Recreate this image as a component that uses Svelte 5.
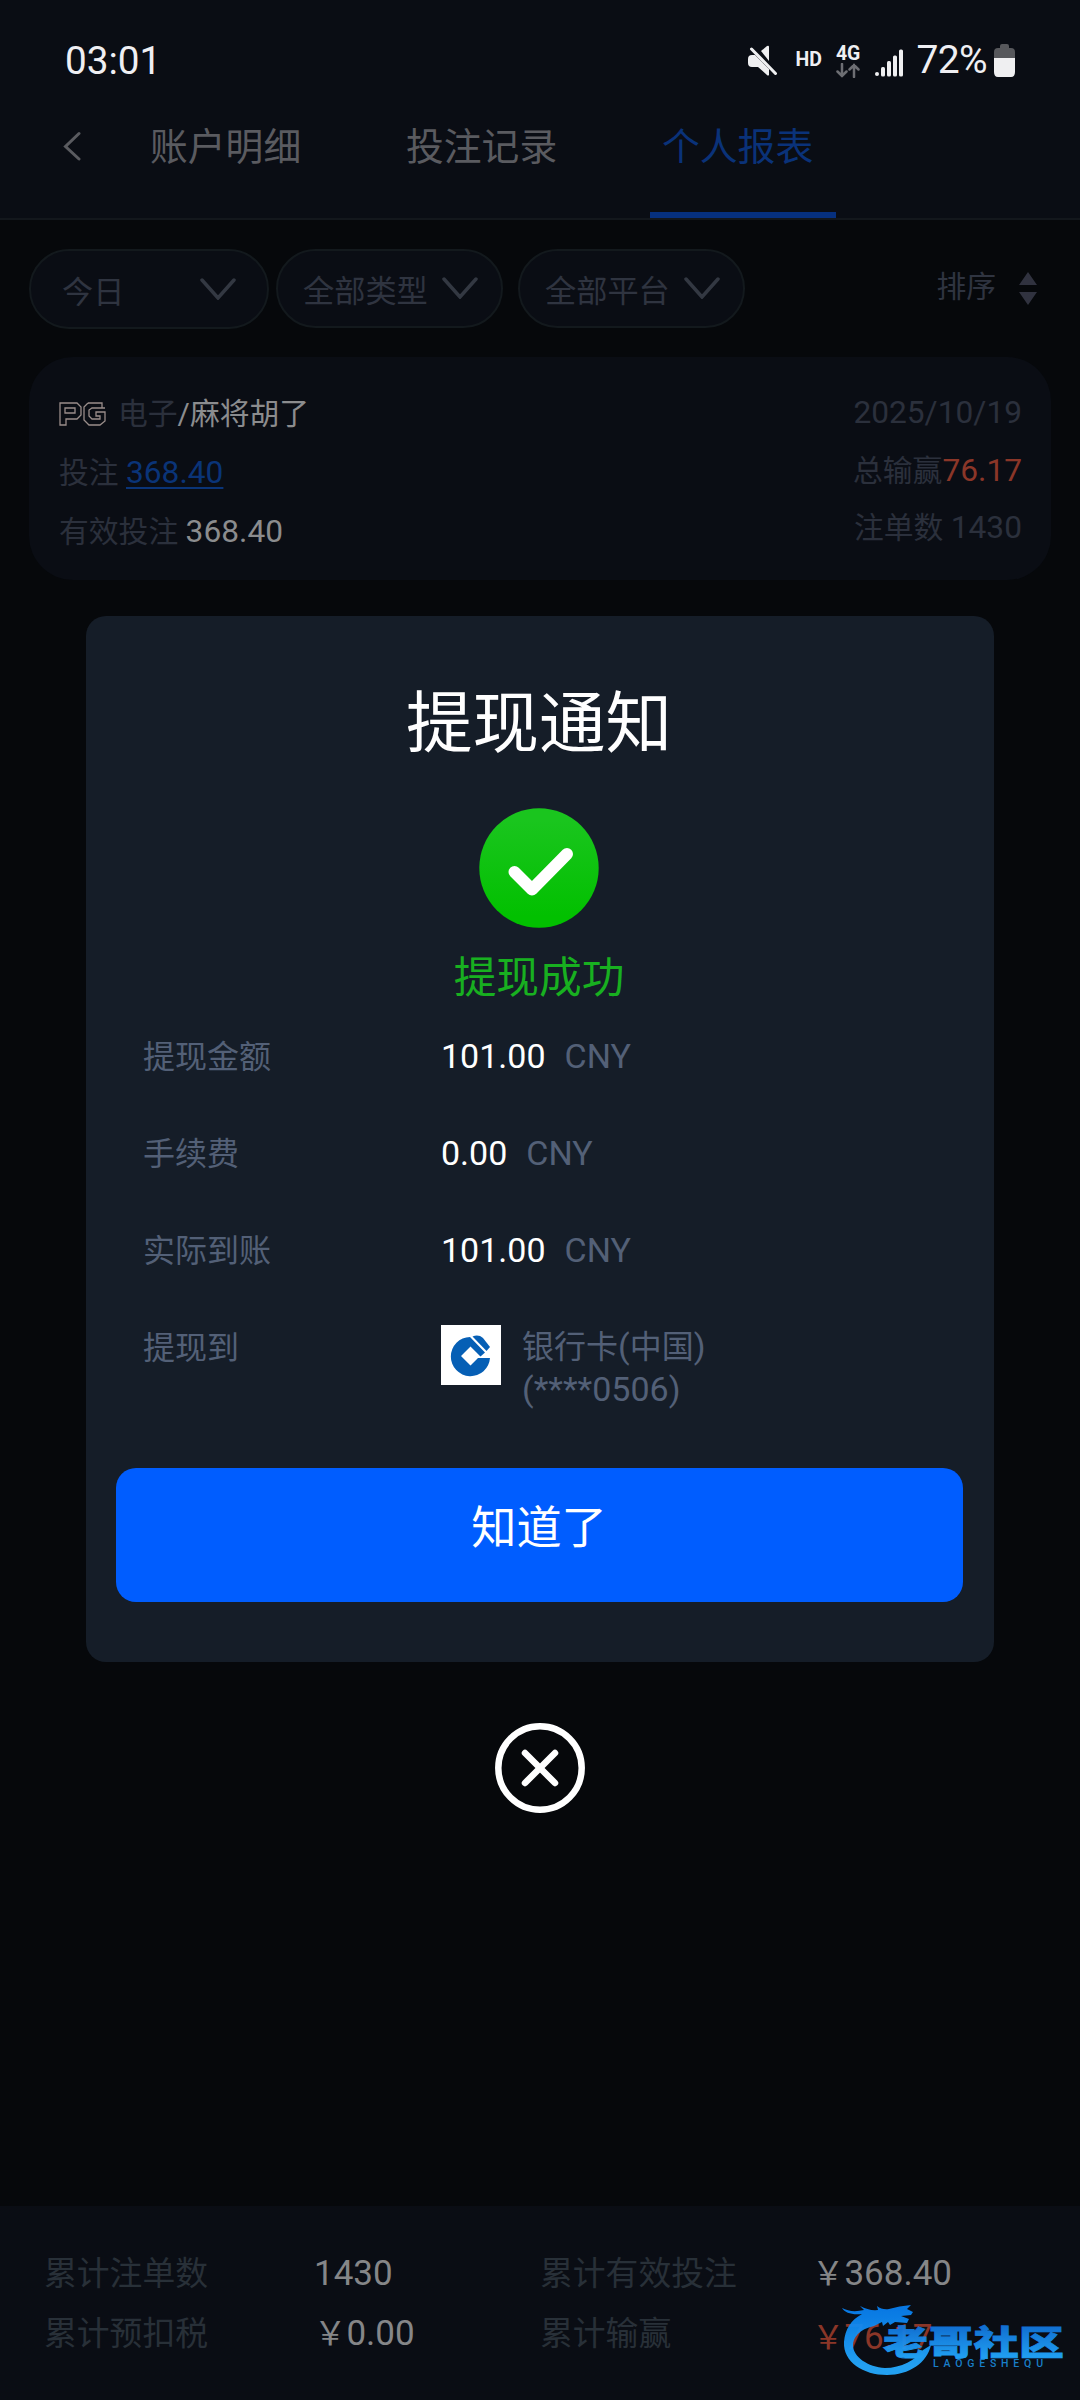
<script>
    const tabs = ["账户明细", "投注记录", "个人报表"];
    let activeTab = $state("个人报表");

    const filters = [
        { label: "今日", wide: true },
        { label: "全部类型" },
        { label: "全部平台" },
    ];

    const amounts = [
        { label: "提现金额", value: "101.00" },
        { label: "手续费", value: "0.00" },
        { label: "实际到账", value: "101.00" },
    ];

    let showModal = $state(true);

    const close = () => {
        showModal = false;
    };
</script>

<div class="page">
    <div class="status-bar">
        <span class="time">03:01</span>
        <div class="status-icons">
            <svg class="mute" viewBox="0 0 30 31" width="30" height="31">
                <path d="M0 14q0-4 4-4h3l14 14v6q-1 1-2 0l-9-8H4q-4 0-4-4z" />
                <path d="M13 6l6-5q2-1 2 1v14z" />
                <path class="slash" d="M3.500 4L27.500 28.500" />
            </svg>
            <span class="hd">HD</span>
            <div class="network">
                <span>4G</span>
                <svg viewBox="0 0 24 15" width="24" height="15">
                    <path d="M6 1v12M1.500 8.500L6 13l4.500-4.500M18 14V2M13.500 6.500L18 2l4.500 4.500" />
                </svg>
            </div>
            <svg class="signal" viewBox="0 0 28 28" width="28" height="28">
                <rect x="0" y="23" width="4" height="4" rx="2" />
                <rect x="6" y="18" width="4" height="9.500" rx="1.500" />
                <rect x="12" y="12" width="4" height="15.500" rx="1.500" />
                <rect x="18" y="6.500" width="4" height="21" rx="1.500" />
                <rect x="24" y="0.500" width="4" height="27" rx="1.500" />
            </svg>
            <span class="percent">72%</span>
            <svg class="battery" viewBox="0 0 21 33" width="21" height="33">
                <path class="empty" d="M6 2q0-2 2-2h5q2 0 2 2v2h2q4 0 4 4v7H0V8q0-4 4-4h2z" />
                <path d="M0 14h21v14q0 5-4 5H4q-4 0-4-5z" />
            </svg>
        </div>
    </div>

    <nav class="nav">
        <button class="back" aria-label="返回">
            <svg viewBox="0 0 18 30" width="18" height="30">
                <path d="M16 2.500L2.500 15.500 16 28" />
            </svg>
        </button>
        <div class="tabs">
            {#each tabs as tab}
                <button
                    class="tab"
                    class:active={tab === activeTab}
                    onclick={() => (activeTab = tab)}>{tab}</button
                >
            {/each}
        </div>
    </nav>

    <div class="filters">
        {#each filters as filter}
            <button class="filter" class:wide={filter.wide}>
                <span>{filter.label}</span>
                <svg viewBox="0 0 36 22" width="36" height="22">
                    <path d="M2 2l16 18L34 2" />
                </svg>
            </button>
        {/each}
        <button class="sort">
            <span>排序</span>
            <svg viewBox="0 0 18 33" width="18" height="33">
                <path d="M9 0l9 13H0zM0 20h18L9 33z" />
            </svg>
        </button>
    </div>

    <section class="card">
        <div class="card-left">
            <p class="game">
                <svg viewBox="0 0 47 24" width="47" height="24">
                    <path d="M1 1h17l4 4v8l-4 4H7v6H1zM6 6h10v5H6z" />
                    <path d="M29 1h14v5h3M29 1l-4 4v13l5 5h11l5-4v-9h-9v4h4v3h-8l-3-3V8l3-2h10" />
                </svg>
                <span>电子</span><b>/麻将胡了</b>
            </p>
            <p>投注 <a class="num" href="#bets">368.40</a></p>
            <p>有效投注 <b class="num">368.40</b></p>
        </div>
        <div class="card-right">
            <p class="num">2025/10/19</p>
            <p>总输赢<span class="num red">76.17</span></p>
            <p>注单数 <span class="num">1430</span></p>
        </div>
    </section>

    <footer class="totals">
        <span>累计注单数</span>
        <b>1430</b>
        <span>累计有效投注</span>
        <b class="shift"><i>￥</i>368.40</b>
        <span>累计预扣税</span>
        <b><i>￥</i>0.00</b>
        <span>累计输赢</span>
        <b class="red shift low"><i>￥</i>76.17</b>
    </footer>
</div>

{#if showModal}
    <div class="overlay">
        <div class="modal">
            <h1>提现通知</h1>
            <svg class="success" viewBox="0 0 120 120" width="120" height="120">
                <defs>
                    <linearGradient id="green" x1="0" y1="0" x2="0" y2="1">
                        <stop offset="0.1" stop-color="#1ac51e" />
                        <stop offset="0.9" stop-color="#02c000" />
                    </linearGradient>
                </defs>
                <circle cx="60" cy="60" r="59.700" fill="url(#green)" />
                <path d="M35.500 64L53 81.500 88 46" />
            </svg>
            <p class="result">提现成功</p>
            <dl>
                {#each amounts as row}
                    <div class="row">
                        <dt>{row.label}</dt>
                        <dd><b>{row.value}</b><span>CNY</span></dd>
                    </div>
                {/each}
                <div class="row bank">
                    <dt>提现到</dt>
                    <dd>
                        <svg viewBox="0 0 60 60" width="60" height="60">
                            <rect width="60" height="60" fill="#fff" />
                            <path
                                d="M49 33A19.600 19.600 0 1 1 29 12L44 27.500 39.500 31.500 29.500 21.500 20 31 29.500 40.500 37 33z"
                            />
                            <path d="M31.500 11.500q6-2.500 10.500 1.500l7 9-3.500 4z" />
                        </svg>
                        <p><em>银行卡</em>(<em>中国</em>)<br />(****0506)</p>
                    </dd>
                </div>
            </dl>
            <button class="confirm" onclick={close}>知道了</button>
        </div>
        <button class="close" aria-label="关闭" onclick={close}>
            <svg viewBox="0 0 90 90" width="90" height="90">
                <circle cx="45" cy="45" r="41.700" />
                <path d="M30 30l30 30M60 30L30 60" />
            </svg>
        </button>
    </div>
{/if}

<svg class="watermark" viewBox="0 0 226 76" width="226" height="76">
    <defs>
        <linearGradient id="blue" x1="0" y1="0" x2="0" y2="76" gradientUnits="userSpaceOnUse">
            <stop offset="0.1" stop-color="#087ff0" />
            <stop offset="0.85" stop-color="#25aaff" />
        </linearGradient>
        <!-- the name is drawn upwards from its own baseline at 0 -->
        <linearGradient id="name-blue" x1="0" y1="-30" x2="0" y2="2" gradientUnits="userSpaceOnUse">
            <stop offset="0" stop-color="#1173dc" />
            <stop offset="1" stop-color="#22a8ff" />
        </linearGradient>
    </defs>
    <path
        fill="url(#blue)"
        d="M2 7q9 5 22 2l-4-4q9 5 18 4l-1-4q5 4 12 3 10-3 22-4l-4 4 6 3-2 3-10 1 8 3-2 4-12-1-5 3-2-3-5 4-1-4-8 4C19 28 13 37 13 44c0 12 15 22 32 23 16 0 31-8 38-18l8-5c-4 18-22 30-44 30C23 74 3 61 4 41 5 28 11 19 22 13 12 14 5 12 2 7z"
    />
    <text class="wm-name" transform="translate(43 54) scale(1.320 1)" textLength="137">老哥社区</text>
    <text class="wm-latin" x="93" y="66" textLength="110">LAOGESHEQU</text>
</svg>

<style>
    :global(body) {
        background: #06080b;
        font-family: Roboto, "Noto Sans CJK SC", sans-serif;
    }

    button {
        padding: 0;
        border: none;
        background: none;
        color: inherit;
        font: inherit;
        cursor: pointer;
    }

    p,
    h1,
    dl,
    dd {
        margin: 0;
    }

    b,
    h1 {
        font-weight: 400;
    }

    i,
    em {
        font-style: normal;
    }

    svg {
        display: block;
        flex: none;
    }

    .page {
        display: flex;
        flex-direction: column;
        height: 2400px;
    }

    .status-bar {
        display: flex;
        justify-content: space-between;
        height: 120px;
        padding: 0 65px 0 65px;
        background: #0a0d14;
        color: #efeff3;
        line-height: 122px;
    }

    .time {
        font-size: 38.7px;
    }

    .status-icons {
        display: flex;
        align-items: center;
        fill: #efeff1;
    }

    .slash {
        fill: none;
        stroke: #efeff1;
        stroke-width: 3;
        stroke-linecap: round;
    }

    .hd {
        margin-left: 17px;
        font-size: 19.5px;
        font-weight: 700;
    }

    .network {
        margin: 3px 15px 0 14px;
        font-size: 19.5px;
        font-weight: 700;
        line-height: 18px;
    }

    .network svg {
        fill: none;
        stroke: #6d6e73;
        stroke-width: 2.5;
        stroke-linecap: round;
    }

    .signal {
        margin-top: 5px;
    }

    .percent {
        margin: 0 7px 0 13px;
        font-size: 39px;
        letter-spacing: -0.6px;
    }

    .battery .empty {
        fill: #57585c;
    }

    .nav {
        display: flex;
        height: 98px;
        border-bottom: 2px solid #13171c;
        background: #0a0d14;
    }

    .back {
        flex: none;
        width: 81px;
        height: 52px;
        padding-left: 63px;
    }

    .back svg {
        fill: none;
        stroke: #5a5b60;
        stroke-width: 3;
        stroke-linecap: round;
    }

    .tabs {
        display: flex;
        gap: 70px;
        padding-left: 57px;
    }

    .tab {
        box-sizing: border-box;
        width: 186px;
        padding: 0 23px 39px 12px;
        border-bottom: 6px solid transparent;
        color: #5a5b60;
        font-size: 37.8px;
        line-height: 54px;
        text-align: left;
        white-space: nowrap;
    }

    .tab.active {
        border-color: #06307f;
        color: #0a3279;
    }

    .filters {
        display: flex;
        align-items: flex-start;
        height: 80px;
        margin: 29px 43px 0 29px;
        color: #2f3440;
    }

    .filter {
        display: flex;
        box-sizing: border-box;
        align-items: center;
        justify-content: space-between;
        width: 227px;
        height: 79px;
        margin-right: 15px;
        padding: 6px 23px 0 25px;
        border: 2px solid #13191d;
        border-radius: 40px;
        background: #0a0d14;
        font-size: 31.2px;
        line-height: 76px;
    }

    .filter.wide {
        width: 240px;
        height: 80px;
        margin-right: 7px;
        padding: 7px 31px 0 31px;
    }

    .filter svg {
        margin-top: -7px;
        fill: none;
        stroke: #333842;
        stroke-width: 3.5;
        stroke-linecap: round;
    }

    .sort {
        display: flex;
        align-items: center;
        margin-left: auto;
        font-size: 29.8px;
        line-height: 76px;
    }

    .sort svg {
        margin: 2px 0 0 23px;
        fill: #30323f;
    }

    .card {
        display: flex;
        justify-content: space-between;
        box-sizing: border-box;
        height: 223px;
        margin: 28px 29px 0;
        padding: 27px 29px 0 30px;
        border-radius: 44px;
        background: #0a0d14;
        color: #2b303c;
        font-size: 29.8px;
        line-height: 59px;
    }

    .card b {
        color: #8b8c8e;
    }

    .card a {
        color: #0a3478;
        text-decoration-thickness: 2px;
        text-underline-offset: 4px;
    }

    .num {
        font-size: 31.7px;
    }

    .game {
        display: flex;
        align-items: center;
    }

    .game svg {
        margin-right: 12px;
        fill: none;
        stroke: #9a8d8a;
        stroke-width: 1.3;
    }

    .card-right {
        line-height: 57.5px;
        text-align: right;
    }

    .card .red,
    .totals .red {
        color: #8b3628;
    }

    .totals {
        display: grid;
        box-sizing: border-box;
        grid-template-columns: 270px 226px 273px 1fr;
        grid-auto-rows: 60px;
        align-items: center;
        height: 194px;
        margin-top: auto;
        padding: 38px 0 0 44px;
        background: #0a0d14;
        color: #283038;
        font-size: 32.8px;
        line-height: 60px;
    }

    .totals b {
        color: #858688;
        font-size: 35px;
    }

    .totals i {
        font-size: 32.4px;
    }

    .totals .shift {
        margin-left: -1px;
    }

    .totals .low {
        padding-top: 8px;
    }

    .overlay {
        position: absolute;
        top: 0;
        left: 0;
        display: flex;
        box-sizing: border-box;
        flex-direction: column;
        align-items: center;
        width: 1080px;
        height: 2400px;
        padding-top: 616px;
    }

    .modal {
        display: flex;
        box-sizing: border-box;
        flex-direction: column;
        align-items: center;
        width: 908px;
        height: 1046px;
        padding: 60px 31px 0 29px;
        border-radius: 20px;
        background: #151d28;
        color: #fff;
    }

    h1 {
        font-size: 66.5px;
        line-height: 97px;
    }

    .success {
        margin-top: 35px;
    }

    .success path {
        fill: none;
        stroke: #fff;
        stroke-width: 12;
        stroke-linecap: round;
        stroke-linejoin: round;
    }

    .result {
        margin-top: 20px;
        color: #18b020;
        font-size: 42.7px;
        line-height: 60px;
    }

    dl {
        align-self: stretch;
        padding: 0 28px;
        color: #536077;
        font-size: 32px;
    }

    .row {
        display: grid;
        grid-template-columns: 298px 1fr;
        height: 97px;
        line-height: 98px;
    }

    dd {
        font-size: 34px;
        line-height: 97px;
    }

    dd b {
        margin-right: 19px;
        color: #fff;
    }

    .bank {
        height: 169px;
    }

    .bank dd {
        display: flex;
        gap: 21px;
        padding-top: 26px;
        line-height: 41.5px;
    }

    .bank svg {
        fill: #065fb5;
    }

    .bank p {
        padding-top: 1px;
    }

    .bank em {
        font-size: 32px;
    }

    .confirm {
        width: 847px;
        height: 134px;
        padding-bottom: 13px;
        border-radius: 20px;
        background: #005dff;
        font-size: 45.2px;
        line-height: 121px;
    }

    .close {
        margin-top: 61px;
    }

    .close svg {
        fill: none;
        stroke: #fff;
        stroke-width: 6.5;
        stroke-linecap: round;
    }

    .watermark {
        position: absolute;
        top: 2301px;
        left: 840px;
        opacity: 0.94;
    }

    .wm-name {
        fill: url(#name-blue);
        stroke: url(#name-blue);
        stroke-width: 0.8;
        font-size: 34px;
        font-weight: 900;
    }

    .wm-latin {
        fill: #1a86d4;
        font-size: 10.5px;
        font-weight: 500;
    }
</style>
